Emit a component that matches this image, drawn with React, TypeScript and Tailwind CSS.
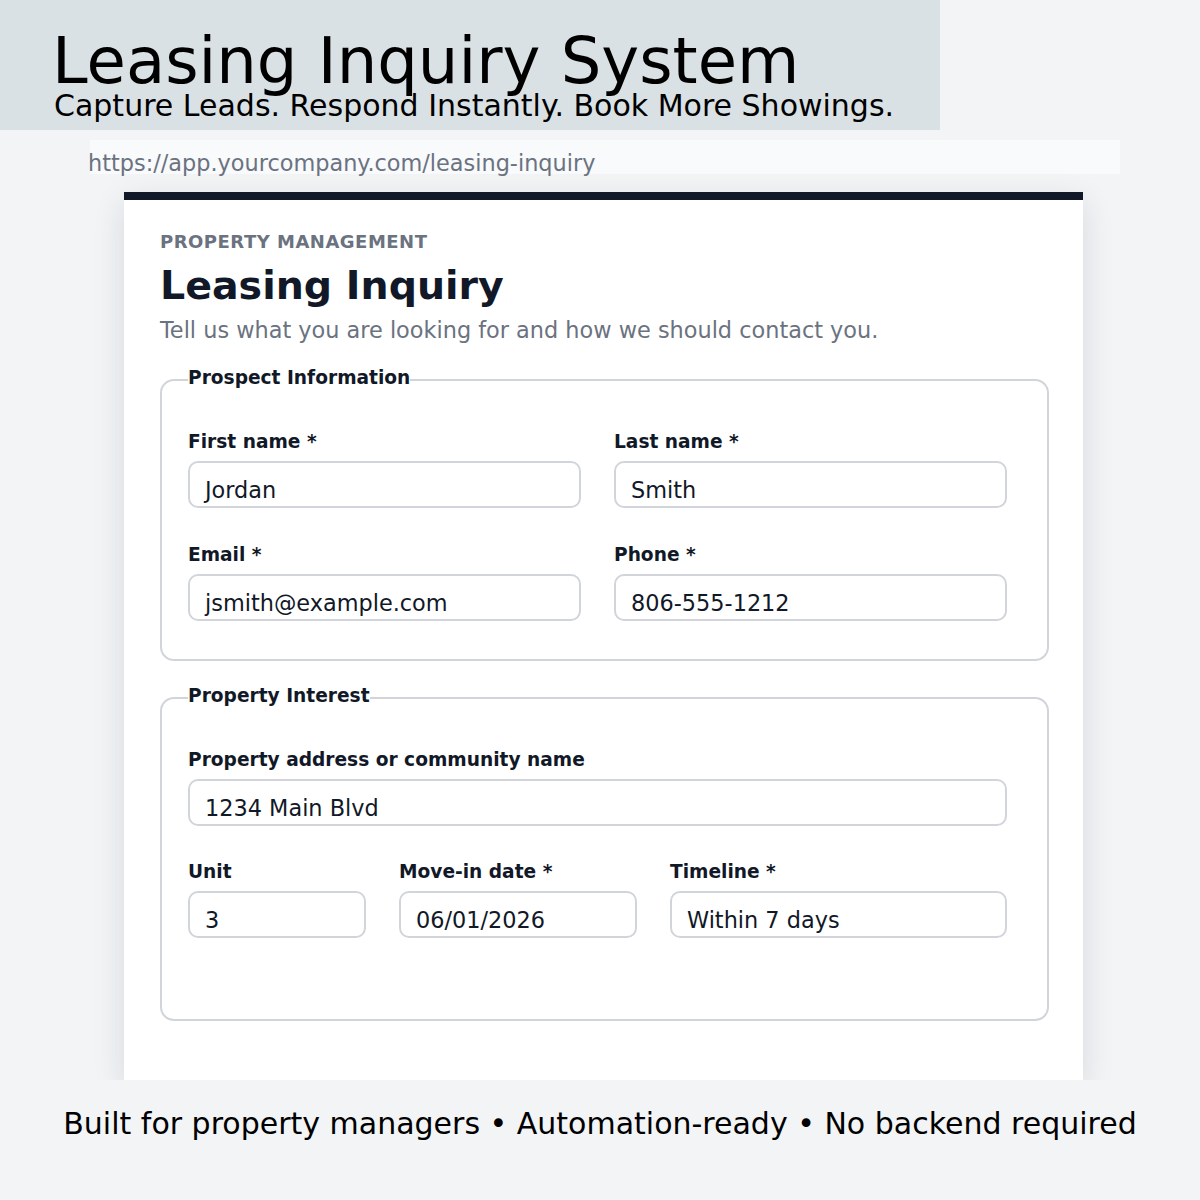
const font = { fontFamily: '"DejaVu Sans", "Liberation Sans", sans-serif' };

function Field({ label, value, className }: { label: string; value: string; className?: string }) {
  return (
    <div className={className}>
      <div className="text-[18.6px] leading-[24px] font-bold text-[#111827]">{label}</div>
      <div className="mt-[7px] h-[47px] rounded-[10px] border-2 border-[#d1d5db] bg-white px-[15px] pt-[12px] text-[22.4px] leading-[30px] text-[#111827]">
        {value}
      </div>
    </div>
  );
}

function Section({ title, children, className }: { title: string; children: React.ReactNode; className?: string }) {
  return (
    <fieldset className={"rounded-[14px] border-2 border-[#d1d5db] px-[26px] " + (className ?? "")}>
      <legend className="px-0 text-[18.6px] leading-[18px] pb-[4px] font-bold text-[#111827]">{title}</legend>
      {children}
    </fieldset>
  );
}

export default function App() {
  return (
    <div className="w-[1200px] h-[1200px] bg-[#f3f4f6] overflow-hidden" style={font}>
      {/* Banner */}
      <div className="w-[940px] h-[130px] bg-[#d9e1e5] pl-[52px] pt-[26px]">
        <h1 className="text-[64px] leading-[70px] text-black">Leasing Inquiry System</h1>
        <p className="ml-[2px] -mt-[7px] text-[30px] leading-[34px] text-black">
          Capture Leads. Respond Instantly. Book More Showings.
        </p>
      </div>

      {/* URL bar */}
      <div className="ml-[90px] mt-[10px] w-[1030px] h-[34px] bg-[#f8fafc]">
        <span className="-ml-[2px] block text-[22.4px] leading-[46px] text-[#6b7280]">
          https://app.yourcompany.com/leasing-inquiry
        </span>
      </div>

      {/* Card */}
      <div className="ml-[124px] mt-[18px] w-[959px] h-[888px] overflow-hidden bg-white border-t-[8px] border-[#111827] shadow-[0_10px_30px_rgba(15,23,42,0.12)] px-[36px] pt-[30px]">
        <div className="text-[18px] leading-[24px] font-bold tracking-[0.5px] text-[#6b7280]">PROPERTY MANAGEMENT</div>
        <h2 className="mt-[7px] text-[39.5px] leading-[48px] font-bold text-[#111827]">Leasing Inquiry</h2>
        <p className="mt-[7px] text-[22.4px] leading-[28px] text-[#6b7280]">
          Tell us what you are looking for and how we should contact you.
        </p>

        <Section title="Prospect Information" className="mt-[25px] w-[889px] h-[292px] pt-[39px]">
          <div className="grid grid-cols-[393px_393px] gap-x-[33px] gap-y-[35px]">
            <Field label="First name *" value="Jordan" />
            <Field label="Last name *" value="Smith" />
            <Field label="Email *" value="jsmith@example.com" />
            <Field label="Phone *" value="806-555-1212" />
          </div>
        </Section>

        <Section title="Property Interest" className="mt-[26px] w-[889px] h-[334px] pt-[39px]">
          <Field label="Property address or community name" value="1234 Main Blvd" className="w-[819px]" />
          <div className="mt-[34px] grid grid-cols-[178px_238px_337px] gap-x-[33px]">
            <Field label="Unit" value="3" />
            <Field label="Move-in date *" value="06/01/2026" />
            <Field label="Timeline *" value="Within 7 days" />
          </div>
        </Section>
      </div>

      {/* Footer */}
      <div className="h-[120px] bg-[#f3f4f6] text-center text-[30px] leading-[34px] text-black pt-[27px]">
        Built for property managers • Automation-ready • No backend required
      </div>
    </div>
  );
}
